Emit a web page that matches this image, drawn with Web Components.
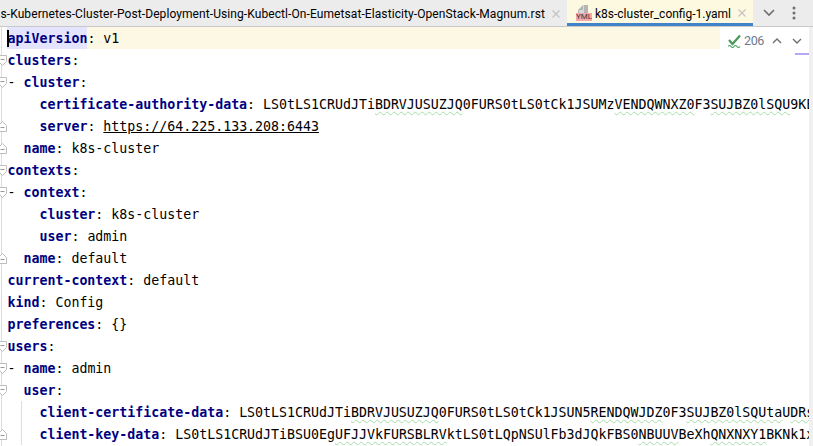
<!DOCTYPE html>
<html>
<head>
<meta charset="utf-8">
<title>k8s-cluster_config-1.yaml</title>
<style>
  html, body { margin: 0; height: 100%; overflow: hidden; background: #fff; }
  body { display: flex; flex-direction: column; width: 813px; height: 446px; }
</style>
</head>
<body>
<ide-tabbar>
  <ide-tab slot="tabs" class="first" label="s-Kubernetes-Cluster-Post-Deployment-Using-Kubectl-On-Eumetsat-Elasticity-OpenStack-Magnum.rst"></ide-tab>
  <ide-tab slot="tabs" active icon label="k8s-cluster_config-1.yaml"></ide-tab>
</ide-tabbar>
<yaml-editor>
  <yaml-line current k="apiVersion" v="v1"></yaml-line>
  <yaml-line k="clusters" fold="start"></yaml-line>
  <yaml-line dash k="cluster" fold="start"></yaml-line>
  <yaml-line indent="4" k="certificate-authority-data" v="LS0tLS1CRUdJTi[[BDRVJUSUZJQ]]0FURS0tLS0tCk1JSUMz[[VENDQWNXZ0]]F3[[SUJBZ0lSQU]]9KE"></yaml-line>
  <yaml-line indent="4" k="server" link="https://64.225.133.208:6443" fold="end"></yaml-line>
  <yaml-line indent="2" k="name" v="k8s-cluster" fold="end"></yaml-line>
  <yaml-line k="contexts" fold="start"></yaml-line>
  <yaml-line dash k="context" fold="start"></yaml-line>
  <yaml-line indent="4" k="cluster" v="k8s-cluster"></yaml-line>
  <yaml-line indent="4" k="user" v="admin"></yaml-line>
  <yaml-line indent="2" k="name" v="default" fold="end"></yaml-line>
  <yaml-line k="current-context" v="default"></yaml-line>
  <yaml-line k="kind" v="Config"></yaml-line>
  <yaml-line k="preferences" v="{}"></yaml-line>
  <yaml-line k="users" fold="start"></yaml-line>
  <yaml-line dash k="name" v="admin" fold="start"></yaml-line>
  <yaml-line indent="2" k="user" fold="start"></yaml-line>
  <yaml-line indent="4" guide k="client-certificate-data" v="LS0tLS1CRUdJTi[[BDRVJUSUZJQ]]0FURS0tLS0tCk1JSUN5[[RENDQWJDZ]]0F3[[SUJBZ0lSQUta]]U[[DRs]]"></yaml-line>
  <yaml-line indent="4" guide k="client-key-data" v="LS0tLS1CRUdJTiBSU0Eg[[UFJJVkFURSBLRV]]ktLS0tLQpNSUlFb3dJQkFBS0[[NBUUV]]BeXh[[QNXNXY1]]BKNk1x" fold="end"></yaml-line>
  <ide-inspection slot="overlay" count="206"></ide-inspection>
</yaml-editor>

<script>
const MONO = '"DejaVu Sans Mono", "Liberation Mono", monospace';
const UI = 'Roboto, "Liberation Sans", sans-serif';

class IdeTabbar extends HTMLElement {
  constructor() {
    super();
    this.attachShadow({ mode: 'open' }).innerHTML = `
      <style>
        :host {
          display: flex;
          flex: none;
          height: 27px;
          box-sizing: border-box;
          background: #ececec;
          border-bottom: 1px solid #c9c9c9;
          font: 12px ${UI};
          color: #000;
        }
        .tabs { display: flex; flex: 1; min-width: 0; overflow: hidden; }
        .actions { display: flex; flex: none; width: 60px; align-items: center; padding-left: 9px; gap: 16px; box-sizing: border-box; }
        svg { display: block; }
      </style>
      <div class="tabs"><slot name="tabs"></slot></div>
      <div class="actions">
        <svg width="14" height="10" viewBox="0 0 14 10"><path d="M2 2l5 5 5-5" fill="none" stroke="#6e6e6e" stroke-width="1.6"/></svg>
        <svg width="4" height="14" viewBox="0 0 4 14"><circle cx="2" cy="2" r="1.5" fill="#6e6e6e"/><circle cx="2" cy="7" r="1.5" fill="#6e6e6e"/><circle cx="2" cy="12" r="1.5" fill="#6e6e6e"/></svg>
      </div>`;
  }
}

class IdeTab extends HTMLElement {
  constructor() {
    super();
    this.attachShadow({ mode: 'open' });
  }

  connectedCallback() {
    const active = this.hasAttribute('active');
    const icon = this.hasAttribute('icon') ? `
      <span class="icon">
        <svg width="16" height="9" viewBox="0 0 16 9"><path d="M2 9V6l5-5h5v8z" fill="#b4b4b4"/><path d="M3 9V6h4V1h1v8z" fill="#d8d8d8"/></svg>
        <b>YML</b>
      </span>` : '';
    this.shadowRoot.innerHTML = `
      <style>
        :host {
          display: flex;
          align-items: center;
          box-sizing: border-box;
          height: 26px;
          flex: ${active ? 'none' : '1'};
          min-width: 0;
          justify-content: ${active ? 'flex-start' : 'flex-end'};
          overflow: hidden;
          ${active ? 'width: 186px; background: #fdf9e0; border-bottom: 3px solid #4083c9; padding: 3px 0 0 9px;' : 'padding-right: 7px; padding-top: 1px;'}
        }
        .label { white-space: pre; flex: none; ${active ? 'margin-top: 2px;' : 'letter-spacing: 0.085px;'} }
        .icon { position: relative; flex: none; width: 16px; height: 17px; margin-right: 3px; margin-top: -1px; }
        .icon svg { display: block; position: absolute; left: 0; top: 0; }
        .icon b {
          position: absolute; left: 0; bottom: 0; width: 16px; height: 8px;
          background: #f4a8a8; color: #3a3a3a;
          font: 8px/8px ${UI}; text-align: center;
        }
        .close { flex: none; width: 8px; height: 8px; margin-left: ${active ? 'auto' : '7px'}; margin-right: ${active ? '7px' : '0'}; }
      </style>
      ${icon}
      <span class="label">${this.getAttribute('label')}</span>
      <svg class="close" viewBox="0 0 8 8"><path d="M.5.5l7 7M7.5.5l-7 7" stroke="#c4c4c4" stroke-width="1.2"/></svg>`;
  }
}

class YamlEditor extends HTMLElement {
  constructor() {
    super();
    this.attachShadow({ mode: 'open' }).innerHTML = `
      <style>
        :host {
          display: flex;
          flex: 1;
          min-height: 0;
          position: relative;
          overflow: hidden;
          background: #fff;
          font: 13.28px ${MONO};
          color: #000;
        }
        .lines { flex: 1; min-width: 0; overflow: hidden; }
        .scroll { flex: none; width: 4px; background: #f0f0f0; }
        .mark { position: absolute; right: 4px; top: 26px; width: 14px; height: 2px; background: #b9a6f2; }
        .rail { position: absolute; left: 1px; top: 0; bottom: 0; width: 1px; background: #dcdcdc; }
      </style>
      <div class="rail"></div>
      <div class="lines"><slot></slot></div>
      <div class="scroll"></div>
      <div class="mark"></div>
      <slot name="overlay"></slot>`;
  }
}

class YamlLine extends HTMLElement {
  constructor() {
    super();
    this.attachShadow({ mode: 'open' });
  }

  connectedCallback() {
    const indent = Number(this.getAttribute('indent') || 0);
    const key = this.getAttribute('k');
    const current = this.hasAttribute('current');
    const dash = this.hasAttribute('dash') ? '- ' : '';
    const value = (this.getAttribute('v') || '')
      .replace(/\[\[(.*?)\]\]/g, '<span class="typo">$1</span>');
    const link = this.getAttribute('link');
    const fold = this.getAttribute('fold');
    const tail = link ? `<span class="link">${link}</span>` : value;
    const sep = this.getAttribute('v') || link ? ': ' : ':';

    this.shadowRoot.innerHTML = `
      <style>
        :host {
          display: block;
          position: relative;
          height: 22px;
          line-height: 24px;
          padding-left: 7.5px;
          ${current ? 'background: linear-gradient(#e4e4ff, #e4e4ff) no-repeat 7px 0 / 80px 100%, linear-gradient(#fdf8e3, #fdf8e3) no-repeat 7px 0 / 713px 100%;' : ''}
        }
        .text { white-space: pre; height: 22px; }
        .key { color: #000080; font-weight: 700; }
        .link { text-decoration: underline; }
        .typo {
          text-decoration: underline wavy #a8dca8 1px;
          text-decoration-skip-ink: none;
          text-underline-offset: 2px;
        }
        .caret { position: absolute; left: 7px; top: 3px; width: 2px; height: 17px; background: #000; }
        .fold { position: absolute; left: -2px; top: 6px; display: block; }
        .guide { position: absolute; left: 21px; top: 0; bottom: 0; width: 1px; background: #dedede; }
      </style>
      ${this.hasAttribute('guide') ? '<i class="guide"></i>' : ''}
      ${fold === 'start' ? '<svg class="fold" width="9" height="11" viewBox="0 0 9 11"><path d="M.5.5h8v6l-4 4-4-4z" fill="#fff" stroke="#bdbdbd"/><path d="M2.5 4.5h4" stroke="#9a9a9a"/></svg>' : ''}
      ${fold === 'end' ? '<svg class="fold" width="9" height="11" viewBox="0 0 9 11"><path d="M.5 10.5h8v-6l-4-4-4 4z" fill="#fff" stroke="#bdbdbd"/><path d="M2.5 6.5h4" stroke="#9a9a9a"/></svg>' : ''}
      ${current ? '<i class="caret"></i>' : ''}
      <div class="text">${' '.repeat(indent)}${dash}<span class="key">${key}</span>${sep}${tail}</div>`;
  }
}

class IdeInspection extends HTMLElement {
  constructor() {
    super();
    this.attachShadow({ mode: 'open' });
  }

  connectedCallback() {
    this.shadowRoot.innerHTML = `
      <style>
        :host {
          position: absolute;
          right: 6px;
          top: 2px;
          width: 87px;
          height: 23px;
          box-sizing: border-box;
          background: #fff;
          border-radius: 3px;
          display: flex;
          align-items: center;
          padding-left: 8px;
          font: 12.5px ${UI};
          letter-spacing: -0.4px;
          color: #6c7a8a;
        }
        svg { display: block; flex: none; }
        .n { margin-left: 3px; width: 24px; }
      </style>
      <svg width="13" height="14" viewBox="0 0 13 14"><path d="M1 6l3.5 4L12 1.5" fill="none" stroke="#4a9a5a" stroke-width="2.2"/><path d="M0 12.5q1.5-2 3 0t3 0 3 0 3 0" fill="none" stroke="#4a9a5a" stroke-width="1.1"/></svg>
      <span class="n">${this.getAttribute('count')}</span>
      <svg width="12" height="8" viewBox="0 0 12 8" style="margin-left:3px"><path d="M2 6l4-4 4 4" fill="none" stroke="#6e6e6e" stroke-width="1.4"/></svg>
      <svg width="12" height="8" viewBox="0 0 12 8" style="margin-left:8px"><path d="M2 2l4 4 4-4" fill="none" stroke="#6e6e6e" stroke-width="1.4"/></svg>`;
  }
}

customElements.define('ide-tabbar', IdeTabbar);
customElements.define('ide-tab', IdeTab);
customElements.define('yaml-editor', YamlEditor);
customElements.define('yaml-line', YamlLine);
customElements.define('ide-inspection', IdeInspection);
</script>
</body>
</html>
